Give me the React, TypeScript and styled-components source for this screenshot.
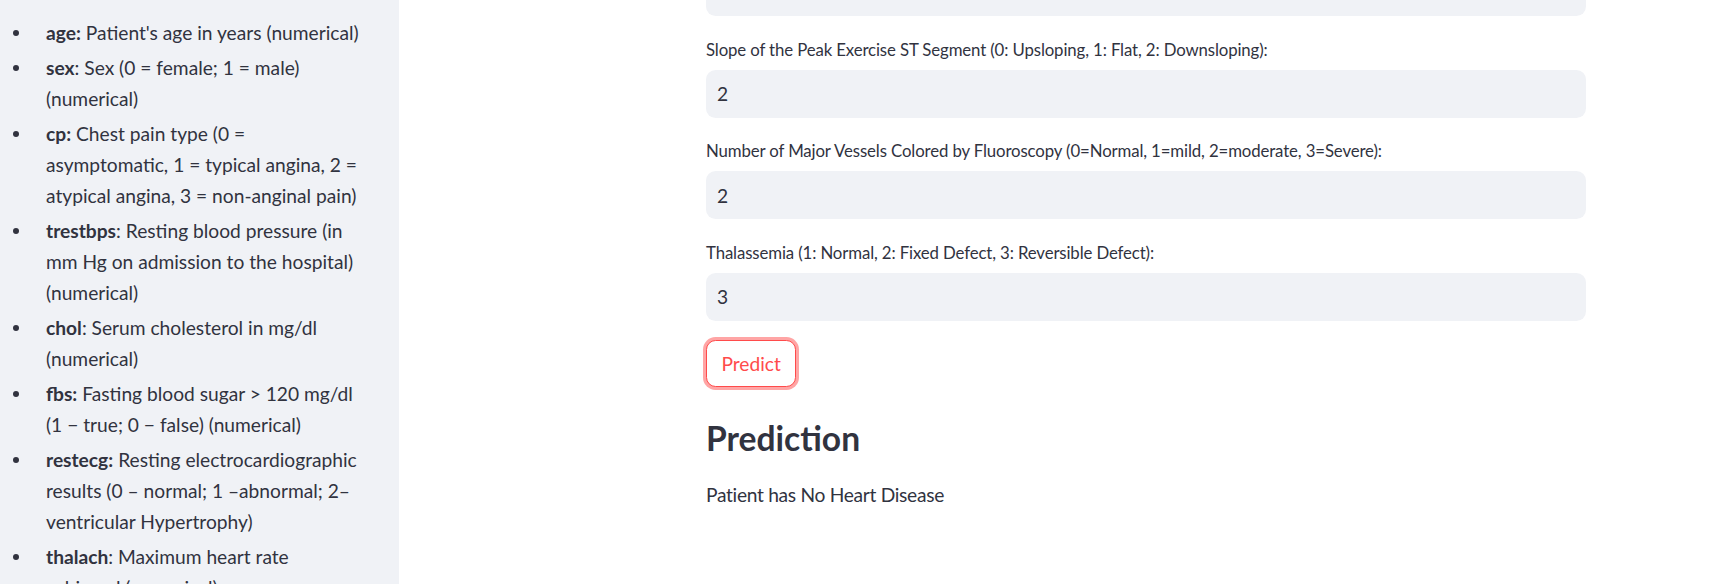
import React from "react";
import styled, { createGlobalStyle } from "styled-components";

const Global = createGlobalStyle`
  html, body { margin: 0; padding: 0; background: #ffffff; }
  body { font-family: "Lato", "Noto Sans", sans-serif; color: #31333f; overflow: hidden; }
  * { box-sizing: border-box; }
`;

const Page = styled.div`
  display: flex;
  width: 1719px;
  height: 584px;
  overflow: hidden;
`;

const Sidebar = styled.aside`
  flex: 0 0 399px;
  height: 584px;
  background: #f0f2f6;
  overflow: hidden;
  padding-top: 17px;
`;

const List = styled.ul`
  list-style: none;
  margin: 0;
  padding: 0;
  display: flex;
  flex-direction: column;
  gap: 4px;
`;

const Item = styled.li`
  display: grid;
  grid-template-columns: 46px 1fr;
  font-size: 19.2px;
  line-height: 31px;
  color: #31333f;
  white-space: nowrap;
`;

const BulletCell = styled.span`
  height: 31px;
  display: flex;
  align-items: center;
  padding-left: 13px;
`;

const Dot = styled.span`
  width: 6px;
  height: 6px;
  border-radius: 50%;
  background: #31333f;
`;

const Key = styled.b`
  font-weight: 700;
`;

const Main = styled.main`
  flex: 1 1 auto;
  padding-left: 307px;
`;

const Content = styled.div`
  width: 880px;
  margin-top: -32px;
  display: flex;
  flex-direction: column;
`;

const Field = styled.div`
  display: flex;
  flex-direction: column;
  margin-bottom: 21.5px;
`;

const Label = styled.label`
  font-size: 16.8px;
  line-height: 24px;
  height: 24px;
  margin-bottom: 8px;
  letter-spacing: -0.12px;
  color: #31333f;
  white-space: nowrap;
`;

const Input = styled.div`
  height: 48px;
  border-radius: 9.6px;
  background: #f0f2f6;
  display: flex;
  align-items: center;
  padding-left: 11px;
  font-size: 19.2px;
  color: #31333f;
`;

const Button = styled.button`
  align-self: flex-start;
  margin-top: -2.5px;
  height: 47px;
  padding: 0 14.4px;
  border: 1px solid #ff4b4b;
  border-radius: 9.6px;
  background: #ffffff;
  color: #ff4b4b;
  font-family: inherit;
  font-size: 19.2px;
  line-height: 1;
  padding-top: 1px;
  box-shadow: 0 0 0 3px rgba(255, 75, 75, 0.5);
`;

const Heading = styled.h3`
  margin: 30px 0 0;
  font-size: 33.6px;
  line-height: 42px;
  font-weight: 700;
  color: #31333f;
`;

const Text = styled.p`
  margin: 20px 0 0;
  font-size: 19.2px;
  line-height: 31px;
  letter-spacing: -0.3px;
  color: #31333f;
`;

type Entry = { key: string; boldColon: boolean; lines: string[] };

const entries: Entry[] = [
  { key: "age", boldColon: true, lines: ["Patient's age in years (numerical)"] },
  { key: "sex", boldColon: false, lines: ["Sex (0 = female; 1 = male)", "(numerical)"] },
  {
    key: "cp",
    boldColon: true,
    lines: ["Chest pain type (0 =", "asymptomatic, 1 = typical angina, 2 =", "atypical angina, 3 = non-anginal pain)"],
  },
  {
    key: "trestbps",
    boldColon: false,
    lines: ["Resting blood pressure (in", "mm Hg on admission to the hospital)", "(numerical)"],
  },
  { key: "chol", boldColon: false, lines: ["Serum cholesterol in mg/dl", "(numerical)"] },
  { key: "fbs", boldColon: true, lines: ["Fasting blood sugar > 120 mg/dl", "(1 \u2212 true; 0 \u2212 false) (numerical)"] },
  {
    key: "restecg",
    boldColon: true,
    lines: ["Resting electrocardiographic", "results (0 \u2013 normal; 1 \u2013abnormal; 2\u2013", "ventricular Hypertrophy)"],
  },
  { key: "thalach", boldColon: false, lines: ["Maximum heart rate", "achieved (numerical)"] },
];

const fields = [
  { label: "", value: "" },
  { label: "Slope of the Peak Exercise ST Segment (0: Upsloping, 1: Flat, 2: Downsloping):", value: "2" },
  {
    label: "Number of Major Vessels Colored by Fluoroscopy (0=Normal, 1=mild, 2=moderate, 3=Severe):",
    value: "2",
  },
  { label: "Thalassemia (1: Normal, 2: Fixed Defect, 3: Reversible Defect):", value: "3" },
];

export default function App() {
  return (
    <>
      <Global />
      <Page>
        <Sidebar>
          <List>
            {entries.map((e) => (
              <Item key={e.key}>
                <BulletCell>
                  <Dot />
                </BulletCell>
                <span>
                  {e.boldColon ? <Key>{e.key}:</Key> : <><Key>{e.key}</Key>:</>}{" "}
                  {e.lines.map((l, i) => (
                    <React.Fragment key={i}>
                      {i > 0 && <br />}
                      {l}
                    </React.Fragment>
                  ))}
                </span>
              </Item>
            ))}
          </List>
        </Sidebar>
        <Main>
          <Content>
            {fields.map((f, i) =>
              i === 0 ? (
                <Field key={i}>
                  <Input />
                </Field>
              ) : (
                <Field key={i}>
                  <Label>{f.label}</Label>
                  <Input>{f.value}</Input>
                </Field>
              )
            )}
            <Button>Predict</Button>
            <Heading>Prediction</Heading>
            <Text>Patient has No Heart Disease</Text>
          </Content>
        </Main>
      </Page>
    </>
  );
}
